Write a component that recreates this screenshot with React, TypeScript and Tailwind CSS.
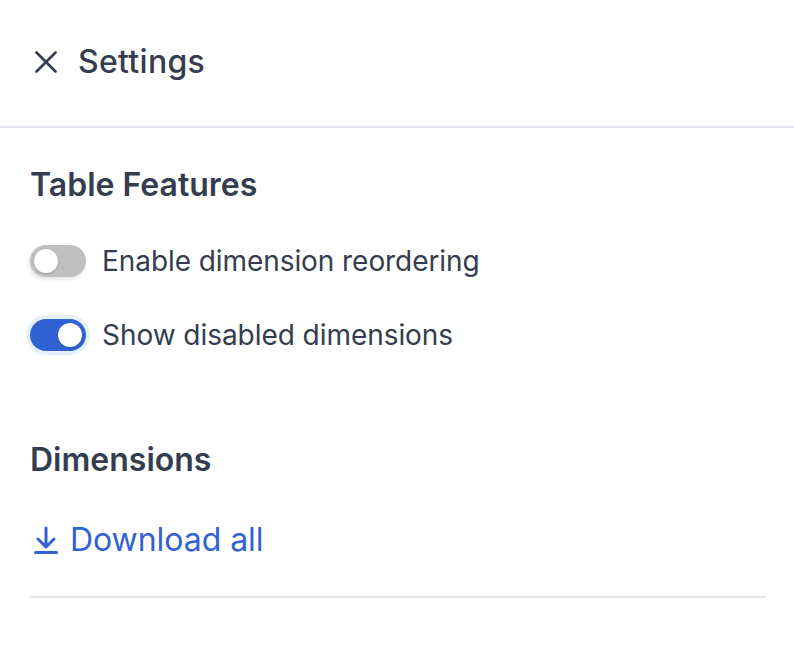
const font = { fontFamily: "Inter, sans-serif" }

const Toggle = ({ on }: { on: boolean }) => (
    <div className={on
        ? "flex h-8 w-14 shrink-0 items-center justify-end rounded-full bg-[#3062d4] p-1 shadow-[0_0_0_4px_#e4f1fd]"
        : "flex h-8 w-14 shrink-0 items-center justify-start rounded-full bg-[#bfbfbf] p-1 shadow-[-1px_2px_4px_rgba(0,0,0,0.12)]"}>
        <div className="h-6 w-6 rounded-full bg-white shadow-[0_1px_2px_rgba(0,0,0,0.2)]" />
    </div>
)

export default function App() {
    return (
        <div className="min-h-[662px] w-[794px] bg-white text-[#343d50]" style={font}>
            <div className="flex h-[128px] items-center gap-[21px] border-b-2 border-[#e3e6ee] pl-[35px] pb-[2px]">
                <svg width="22" height="22" viewBox="0 0 22 22" fill="none" stroke="currentColor" strokeWidth="2.6" strokeLinecap="round">
                    <path d="M1.5 1.5 20.5 20.5M20.5 1.5 1.5 20.5" />
                </svg>
                <p className="text-[32px] leading-[40px] font-medium tracking-[0.3px]">Settings</p>
            </div>
            <div className="pl-[30px] pr-[28px]">
                <p className="mt-[37px] text-[32px] leading-[40px] font-semibold">Table Features</p>
                <div className="mt-[40px] flex items-center gap-[16px]">
                    <Toggle on={false} />
                    <p className="text-[28px] leading-8 tracking-[-0.07px]">Enable dimension reordering</p>
                </div>
                <div className="mt-[42px] flex items-center gap-[16px]">
                    <Toggle on={true} />
                    <p className="text-[28px] leading-8 tracking-[-0.05px]">Show disabled dimensions</p>
                </div>
                <p className="mt-[89px] text-[32px] leading-[40px] font-semibold">Dimensions</p>
                <div className="mt-[40px] flex items-center gap-[12px] pb-[36px] pl-[4px] border-b-2 border-[#e3e6ea] text-[#3062d4]">
                    <svg width="24" height="28" viewBox="0 0 24 28" fill="none" stroke="currentColor" strokeWidth="3" strokeLinecap="round" strokeLinejoin="round">
                        <path d="M12 2V21M4 13l8 8 8-8M1.5 26.5h21" />
                    </svg>
                    <p className="text-[32px] leading-[40px] tracking-[-0.05px]">Download all</p>
                </div>
            </div>
        </div>
    )
}
